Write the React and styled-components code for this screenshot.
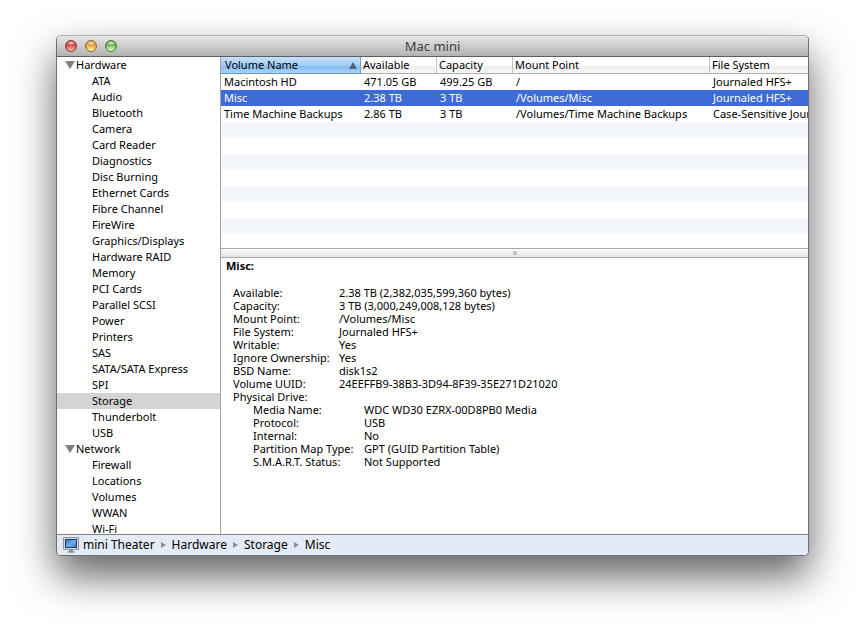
import React, { useState } from "react";
import styled, { createGlobalStyle } from "styled-components";

const sections = [
  {
    name: "Hardware",
    items: [
      "ATA",
      "Audio",
      "Bluetooth",
      "Camera",
      "Card Reader",
      "Diagnostics",
      "Disc Burning",
      "Ethernet Cards",
      "Fibre Channel",
      "FireWire",
      "Graphics/Displays",
      "Hardware RAID",
      "Memory",
      "PCI Cards",
      "Parallel SCSI",
      "Power",
      "Printers",
      "SAS",
      "SATA/SATA Express",
      "SPI",
      "Storage",
      "Thunderbolt",
      "USB",
    ],
  },
  {
    name: "Network",
    items: ["Firewall", "Locations", "Volumes", "WWAN", "Wi-Fi"],
  },
];

const volumes = [
  ["Macintosh HD", "471.05 GB", "499.25 GB", "/", "Journaled HFS+"],
  ["Misc", "2.38 TB", "3 TB", "/Volumes/Misc", "Journaled HFS+"],
  [
    "Time Machine Backups",
    "2.86 TB",
    "3 TB",
    "/Volumes/Time Machine Backups",
    "Case-Sensitive Journaled HFS+",
  ],
];

const details = [
  ["Available:", "2.38 TB (2,382,035,599,360 bytes)"],
  ["Capacity:", "3 TB (3,000,249,008,128 bytes)"],
  ["Mount Point:", "/Volumes/Misc"],
  ["File System:", "Journaled HFS+"],
  ["Writable:", "Yes"],
  ["Ignore Ownership:", "Yes"],
  ["BSD Name:", "disk1s2"],
  ["Volume UUID:", "24EEFFB9-38B3-3D94-8F39-35E271D21020"],
  ["Physical Drive:", ""],
];

const drive = [
  ["Media Name:", "WDC WD30 EZRX-00D8PB0 Media"],
  ["Protocol:", "USB"],
  ["Internal:", "No"],
  ["Partition Map Type:", "GPT (GUID Partition Table)"],
  ["S.M.A.R.T. Status:", "Not Supported"],
];

export default function App() {
  const [item, setItem] = useState("Storage");
  const [volume, setVolume] = useState("Misc");

  return (
    <Page>
      <GlobalStyle />
      <Window>
        <TitleBar>
          <Lights>
            <Light aria-label="Close" $rim="#8e3530" $top="#c23f40" $mid="#f0605c" $glow="#ffc4bf" />
            <Light aria-label="Minimize" $rim="#93662a" $top="#cf8f38" $mid="#f6bd52" $glow="#fff5b0" />
            <Light aria-label="Zoom" $rim="#4c7a3a" $top="#65a04c" $mid="#96d27a" $glow="#e4ffc6" />
          </Lights>
          <h1>Mac mini</h1>
        </TitleBar>
        <Body>
          <Sidebar>
            {sections.map((section) => (
              <section key={section.name}>
                <SectionName>
                  <svg width="10" height="8" viewBox="0 0 10 8">
                    <path d="M0 0h10L5 8z" fill="#808080" />
                  </svg>
                  {section.name}
                </SectionName>
                {section.items.map((name) => (
                  <SidebarItem
                    key={name}
                    $selected={name === item}
                    onClick={() => setItem(name)}
                  >
                    {name}
                  </SidebarItem>
                ))}
              </section>
            ))}
          </Sidebar>
          <Content>
            <VolumeList>
              <Table>
                <colgroup>
                  <col width="140" />
                  <col width="76" />
                  <col width="76" />
                  <col width="197" />
                  <col />
                </colgroup>
                <thead>
                  <tr>
                    <SortedHead>
                      <div>
                        Volume Name
                        <svg width="8" height="7" viewBox="0 0 8 7">
                          <path d="M4 0l4 7H0z" fill="#48637f" />
                        </svg>
                      </div>
                    </SortedHead>
                    <Head>Available</Head>
                    <Head>Capacity</Head>
                    <Head>Mount Point</Head>
                    <Head>File System</Head>
                  </tr>
                </thead>
                <tbody>
                  {volumes.map((row) => (
                    <Row
                      key={row[0]}
                      $selected={row[0] === volume}
                      onClick={() => setVolume(row[0])}
                    >
                      {row.map((cell, i) => (
                        <td key={i}>{cell}</td>
                      ))}
                    </Row>
                  ))}
                </tbody>
              </Table>
            </VolumeList>
            <Splitter role="separator">
              <i />
            </Splitter>
            <Details>
              <h2>Misc:</h2>
              <Fields>
                {details.map(([label, value]) => (
                  <React.Fragment key={label}>
                    <dt>{label}</dt>
                    <dd>{value}</dd>
                  </React.Fragment>
                ))}
              </Fields>
              <Fields $nested>
                {drive.map(([label, value]) => (
                  <React.Fragment key={label}>
                    <dt>{label}</dt>
                    <dd>{value}</dd>
                  </React.Fragment>
                ))}
              </Fields>
            </Details>
          </Content>
        </Body>
        <PathBar>
          <a href="#computer">
            <ComputerIcon />
            mini Theater
          </a>
          <Arrow />
          <a href="#hardware">Hardware</a>
          <Arrow />
          <a href="#storage">Storage</a>
          <Arrow />
          <a href="#misc">Misc</a>
        </PathBar>
      </Window>
    </Page>
  );
}

function Arrow() {
  return (
    <svg width="5" height="6" viewBox="0 0 5 6">
      <path d="M0 0l5 3-5 3z" fill="#8a8f99" />
    </svg>
  );
}

function ComputerIcon() {
  return (
    <svg width="16" height="16" viewBox="0 0 16 16">
      <defs>
        <linearGradient id="screen" x1="0" y1="0" x2="1" y2="1">
          <stop offset="0" stopColor="#2f6fbe" />
          <stop offset="0.5" stopColor="#76b0ea" />
          <stop offset="1" stopColor="#3a78c6" />
        </linearGradient>
      </defs>
      <path d="M0.5 0.5h15v12h-15z" fill="#d6d9de" stroke="#8d929b" />
      <path d="M2 2h12v9H2z" fill="#1d3c70" />
      <path d="M3 3h10v7H3z" fill="url(#screen)" />
      <path d="M6 13h4v1.5H6z" fill="#8c9098" />
      <path d="M4.5 14.5h7v1h-7z" fill="#5e636c" />
    </svg>
  );
}

const GlobalStyle = createGlobalStyle`
  * {
    box-sizing: border-box;
  }
  body {
    margin: 0;
    background: #fff;
    color: #000;
    font-family: "Lucida Grande", "Noto Sans", "Open Sans", sans-serif;
    font-size: 11px;
  }
  h1, h2, dl, dd {
    margin: 0;
  }
  button {
    border: none;
    padding: 0;
    font: inherit;
    color: inherit;
    text-align: left;
  }
  svg {
    display: block;
    flex: none;
  }
`;

const Page = styled.div`
  height: 100vh;
  padding: 35px 56px 78px;
  display: flex;
  overflow: hidden;
`;

const Window = styled.main`
  flex: 1;
  min-width: 0;
  display: flex;
  flex-direction: column;
  overflow: hidden;
  background: #fff;
  border: 1px solid #6b6f78;
  border-top-color: #b0b0b0;
  border-radius: 5px;
  box-shadow: 0 20px 40px rgba(0, 0, 0, 0.62);
`;

const TitleBar = styled.header`
  height: 21px;
  flex: none;
  display: grid;
  grid-template-columns: 1fr auto 1fr;
  align-items: center;
  background: linear-gradient(#e6e6e6, #b3b3b3);
  border-bottom: 1px solid #5e5e5e;
  h1 {
    font-size: 13px;
    line-height: 20px;
    font-weight: normal;
    color: #404040;
  }
`;

const Lights = styled.div`
  display: flex;
  gap: 8px;
  padding-left: 8px;
`;

const Light = styled.button`
  width: 12px;
  height: 12px;
  border-radius: 50%;
  border: 1px solid ${(props) => props.$rim};
  background:
    radial-gradient(ellipse 4px 2px at 50% 20%, rgba(255, 255, 255, 0.9), transparent),
    radial-gradient(ellipse 7px 6px at 50% 100%, ${(props) => props.$glow}, transparent),
    linear-gradient(${(props) => props.$top}, ${(props) => props.$mid});
`;

const Body = styled.div`
  flex: 1;
  min-height: 0;
  display: flex;
`;

const Sidebar = styled.nav`
  width: 164px;
  flex: none;
  overflow: hidden;
  border-right: 1px solid #a5a5a5;
`;

const SectionName = styled.div`
  display: flex;
  align-items: center;
  gap: 1px;
  height: 16px;
  line-height: 16px;
  padding-left: 8px;
`;

const SidebarItem = styled.button`
  display: block;
  width: 100%;
  height: 16px;
  line-height: 16px;
  padding-left: 35px;
  background: ${(props) => (props.$selected ? "#d4d4d4" : "transparent")};
`;

const Content = styled.div`
  flex: 1;
  min-width: 0;
  display: flex;
  flex-direction: column;
`;

const VolumeList = styled.div`
  height: 40%;
  flex: none;
  overflow: hidden;
  background: repeating-linear-gradient(#fff 0 16px, #f3f6fb 16px 32px) 0 17px;
`;

const Table = styled.table`
  width: 100%;
  table-layout: fixed;
  border-collapse: collapse;
  white-space: nowrap;
  td {
    height: 16px;
    line-height: 16px;
    padding: 0 0 0 3px;
    overflow: hidden;
  }
`;

const Head = styled.th`
  height: 17px;
  padding: 0 0 0 2px;
  line-height: 16px;
  font-weight: normal;
  text-align: left;
  vertical-align: top;
  background: linear-gradient(#fff 50%, #f0f0f0 50%, #f6f6f6);
  box-shadow: inset 0 -1px #b0b0b0, inset -1px 0 #c4c4c4;
  &:last-child {
    box-shadow: inset 0 -1px #b0b0b0;
  }
`;

const SortedHead = styled(Head)`
  padding: 0 4px 0 4px;
  background: linear-gradient(#c5e0fa, #a3cdf5 50%, #84baf0 50%, #a9d8fa);
  box-shadow: inset 0 -1px #6a96c8, inset -1px 0 #7ba0cc;
  div {
    display: flex;
    align-items: center;
    justify-content: space-between;
  }
`;

const Row = styled.tr`
  color: ${(props) => (props.$selected ? "#fff" : "#000")};
  background: ${(props) => (props.$selected ? "#3e6bd6" : "transparent")};
`;

const Splitter = styled.div`
  height: 10px;
  flex: none;
  display: flex;
  align-items: center;
  justify-content: center;
  background: linear-gradient(#fcfcfc, #e2e2e2);
  border: solid #a8a8a8;
  border-width: 1px 0;
  i {
    width: 4px;
    height: 4px;
    border: 1px solid #9c9c9c;
    border-radius: 50%;
  }
`;

const Details = styled.article`
  flex: 1;
  padding: 1px 5px;
  line-height: 13px;
  h2 {
    margin-bottom: 14px;
    font-size: 11px;
    font-weight: bold;
  }
`;

const Fields = styled.dl`
  display: grid;
  grid-template-columns: ${(props) => (props.$nested ? "111px 1fr" : "106px 1fr")};
  padding-left: ${(props) => (props.$nested ? "27px" : "7px")};
`;

const PathBar = styled.footer`
  height: 21px;
  flex: none;
  display: flex;
  align-items: center;
  gap: 6px;
  padding-left: 6px;
  font-size: 12px;
  line-height: 20px;
  background: #e4eaf6;
  border-top: 1px solid #80848c;
  a {
    display: flex;
    align-items: center;
    gap: 4px;
    color: inherit;
    text-decoration: none;
  }
`;
